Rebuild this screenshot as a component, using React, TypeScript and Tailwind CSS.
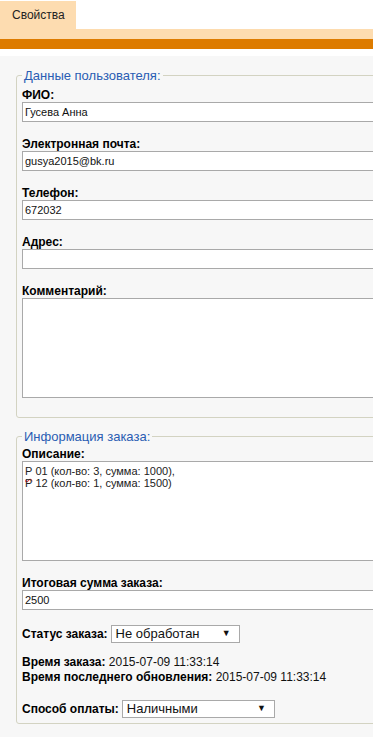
import React from "react";

const font = { fontFamily: '"Liberation Sans", Arial, sans-serif' };

function Field({ label, value, tall }: { label: string; value?: string; tall?: boolean }) {
  return (
    <div className="mb-[15px]">
      <div className="h-[14px] text-[12px] leading-[14px] font-bold text-black">{label}</div>
      {tall ? (
        <div className="h-[100px] w-[520px] border border-[#a9a9a9] bg-white" />
      ) : (
        <div className="h-[20px] w-[520px] border border-[#a9a9a9] bg-white px-[2px] text-[11px] leading-[18px] text-[#111]">
          {value}
        </div>
      )}
    </div>
  );
}

function Select({ value, width }: { value: string; width: string }) {
  return (
    <span
      className={`inline-flex h-[18px] items-center justify-between border border-[#a9a9a9] bg-white pl-[4px] pr-[8px] align-middle text-[13px] text-[#111] ${width}`}
    >
      <span>{value}</span>
      <span className="text-[9px]">▼</span>
    </span>
  );
}

export default function App() {
  return (
    <div className="h-[737px] w-[373px] overflow-hidden bg-white" style={font}>
      {/* Tabs */}
      <div className="pt-[1px]">
        <div className="flex h-[28px] w-[76px] items-center bg-[#fddcb0] pl-[12px] text-[12px] text-[#222]">
          Свойства
        </div>
        <div className="h-[10px] bg-[#fddcb0]" />
        <div className="h-[10px] bg-[#dd7b00]" />
      </div>

      <div className="mt-[7px] min-h-[700px] bg-[#f7f7f7] pl-[16px] pt-[12px]">
        <fieldset className="w-[560px] rounded-[3px] border border-[#d3d3c2] pl-[5px] pb-[4px]">
          <legend className="px-[2px] text-[13px] leading-[15px] text-[#2a5db3]">
            Данные пользователя:
          </legend>
          <div className="pt-[5px]">
            <Field label="ФИО:" value="Гусева Анна" />
            <Field label="Электронная почта:" value="gusya2015@bk.ru" />
            <Field label="Телефон:" value="672032" />
            <Field label="Адрес:" value="" />
            <Field label="Комментарий:" tall />
          </div>
        </fieldset>

        <fieldset className="mt-[11px] w-[560px] rounded-[3px] border border-[#d3d3c2] pl-[5px] pb-[5px]">
          <legend className="px-[2px] text-[13px] leading-[15px] text-[#2a5db3]">
            Информация заказа:
          </legend>
          <div className="pt-[3px]">
            <div className="mb-[15px]">
              <div className="h-[14px] text-[12px] leading-[14px] font-bold text-black">Описание:</div>
              <div className="h-[100px] w-[520px] border border-[#a9a9a9] bg-white px-[2px] pt-[3px] text-[11px] leading-[12px] text-[#222]">
                <div>
                  <span className="underline decoration-wavy decoration-[#e33] underline-offset-[3px]">Р</span> 01 (кол-во: 3, сумма: 1000),
                </div>
                <div>Р 12 (кол-во: 1, сумма: 1500)</div>
              </div>
            </div>
            <div className="mb-[15px]">
              <div className="h-[14px] text-[12px] leading-[14px] font-bold text-black">Итоговая сумма заказа:</div>
              <div className="h-[20px] w-[520px] border border-[#a9a9a9] bg-white px-[2px] text-[11px] leading-[18px] text-[#111]">
                2500
              </div>
            </div>
            <div className="flex items-center gap-[3px] text-[12px] text-black">
              <span className="font-bold">Статус заказа:</span>
              <Select value="Не обработан" width="w-[129px]" />
            </div>
            <div className="mt-[12px] text-[12px] leading-[15px] text-[#111]">
              <div>
                <span className="font-bold text-black">Время заказа:</span> 2015-07-09 11:33:14
              </div>
              <div>
                <span className="font-bold text-black">Время последнего обновления:</span> 2015-07-09 11:33:14
              </div>
            </div>
            <div className="mt-[15px] flex items-center gap-[3px] text-[12px] text-black">
              <span className="font-bold">Способ оплаты:</span>
              <Select value="Наличными" width="w-[153px]" />
            </div>
          </div>
        </fieldset>
      </div>
    </div>
  );
}
